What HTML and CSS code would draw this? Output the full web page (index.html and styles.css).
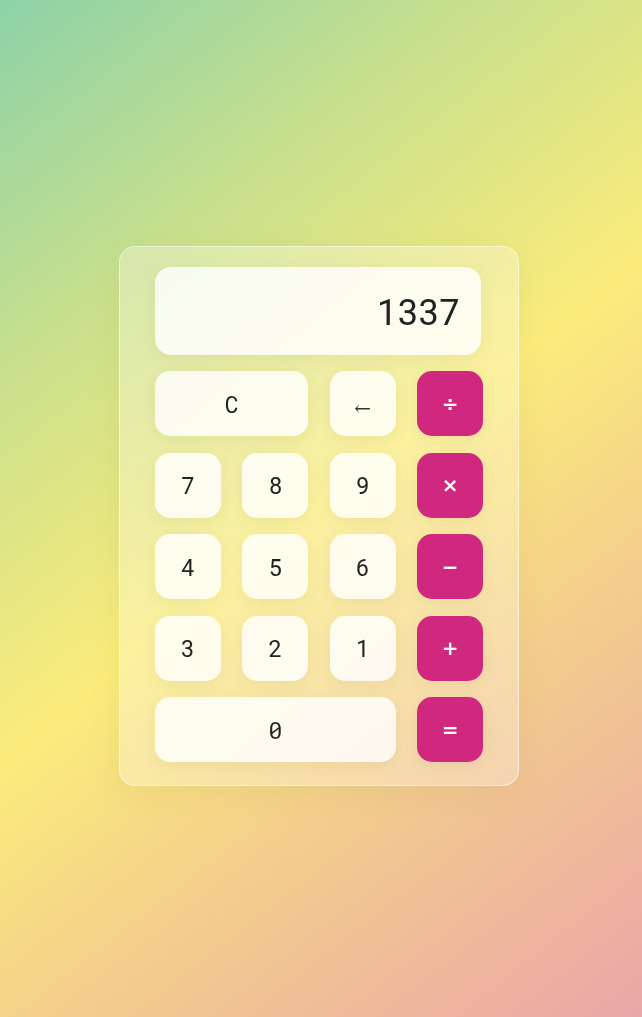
FILE: index.html
```html
<!DOCTYPE html>
<html>
<head>
<meta charset="utf-8">
<link rel="stylesheet" href="styles.css">
</head>
<body>
<main class="page">
  <section class="calc">
    <div class="display">1337</div>
    <div class="keys">
      <button class="key wide2">C</button>
      <button class="key arrow">←</button>
      <button class="key op">÷</button>
      <button class="key">7</button>
      <button class="key">8</button>
      <button class="key">9</button>
      <button class="key op">×</button>
      <button class="key">4</button>
      <button class="key">5</button>
      <button class="key">6</button>
      <button class="key op">−</button>
      <button class="key">3</button>
      <button class="key">2</button>
      <button class="key">1</button>
      <button class="key op">+</button>
      <button class="key wide3">0</button>
      <button class="key op">=</button>
    </div>
  </section>
</main>
</body>
</html>
```

FILE: styles.css
```css
* { box-sizing: border-box; }
html, body { margin: 0; height: 100%; }
body {
  background: linear-gradient(142deg, #8cd2a8 0%, #c9e08c 25%, #fbec7b 50%, #f3cb8e 72%, #eba6a8 100%);
  font-family: Roboto, "Noto Sans", sans-serif;
}
.page {
  height: 1017px;
  display: flex;
  align-items: center;
  justify-content: center;
}
.calc {
  width: 400px;
  padding: 20px 35px 23px;
  margin: 15px 4px 0 0;
  border-radius: 16px;
  background: rgba(255, 255, 255, 0.28);
  border: 1px solid rgba(255, 255, 255, 0.55);
  box-shadow: 0 8px 32px rgba(120, 110, 40, 0.08);
  backdrop-filter: blur(8px);
}
.display {
  height: 88px;
  margin-right: 2px;
  border-radius: 16px;
  background: rgba(255, 255, 255, 0.82);
  box-shadow: 0 4px 18px rgba(90, 90, 20, 0.08);
  display: flex;
  align-items: center;
  justify-content: flex-end;
  padding: 3px 21px 0;
  font-family: Roboto, sans-serif;
  font-size: 36px;
  color: #222;
  letter-spacing: 0.5px;
}
.keys {
  margin-top: 16px;
  display: grid;
  grid-template-columns: repeat(4, 1fr);
  grid-auto-rows: 65px;
  column-gap: 21.5px;
  row-gap: 16.5px;
}
.key {
  border: none;
  border-radius: 15px;
  background: rgba(255, 255, 255, 0.82);
  box-shadow: 0 4px 16px rgba(90, 90, 20, 0.08);
  font-family: "Roboto Mono", "DejaVu Sans Mono", monospace;
  font-size: 23px;
  color: #222;
  padding: 0;
}
.wide2 { grid-column: span 2; }
.wide3 { grid-column: span 3; }
.arrow {
  font-family: "DejaVu Serif", serif;
  font-size: 20px;
  padding-top: 8px;
  color: #333;
}
.op {
  background: #d0287f;
  color: #fff;
  font-family: "DejaVu Sans", sans-serif;
  font-weight: bold;
  font-size: 20px;
}
```
